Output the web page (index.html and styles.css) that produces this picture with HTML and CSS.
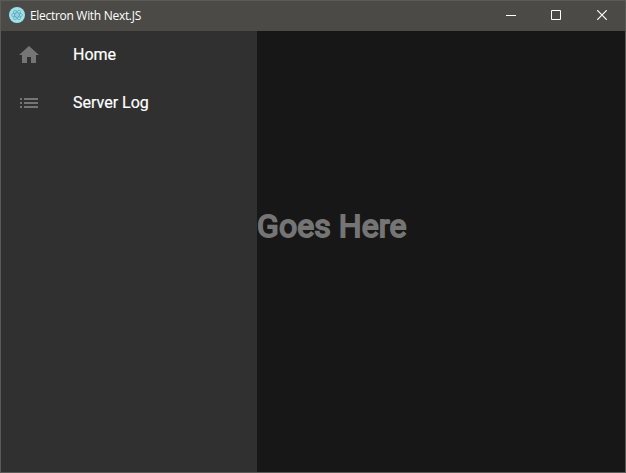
FILE: index.html
```html
<!DOCTYPE html>
<html lang="en">
<head>
<meta charset="utf-8">
<title>Electron With Next.JS</title>
<link rel="stylesheet" href="styles.css">
</head>
<body>
<div class="window">
  <header class="titlebar">
    <svg class="app-icon" width="16" height="16" viewBox="0 0 16 16">
      <circle cx="8" cy="8" r="8" fill="#9de3ee"/>
      <g fill="none" stroke="#47848f" stroke-width=".45">
        <ellipse cx="8" cy="8" rx="5.4" ry="2.1" transform="rotate(0 8 8)"/>
        <ellipse cx="8" cy="8" rx="5.4" ry="2.1" transform="rotate(60 8 8)"/>
        <ellipse cx="8" cy="8" rx="5.4" ry="2.1" transform="rotate(120 8 8)"/>
      </g>
      <circle cx="8" cy="8" r=".5" fill="#47848f"/>
    </svg>
    <span class="title">Electron With Next.JS</span>
    <nav class="controls">
      <span class="control"><svg width="10" height="10" viewBox="0 0 10 10"><path d="M0 5.5h10"/></svg></span>
      <span class="control"><svg width="10" height="10" viewBox="0 0 10 10"><path d="M.5.5h9v9h-9z"/></svg></span>
      <span class="control"><svg width="10" height="10" viewBox="0 0 10 10"><path d="M.2.2l9.6 9.6M9.8.2L.2 9.8" stroke-width="1.2"/></svg></span>
    </nav>
  </header>
  <div class="content">
    <aside class="drawer">
      <a class="item">
        <svg class="icon" viewBox="0 0 24 24"><path d="M10 20v-6h4v6h5v-8h3L12 3 2 12h3v8z"/></svg>
        <span>Home</span>
      </a>
      <a class="item">
        <svg class="icon" viewBox="0 0 24 24"><path d="M3 13h2v-2H3v2zm0 4h2v-2H3v2zm0-8h2V7H3v2zm4 4h14v-2H7v2zm0 4h14v-2H7v2zM7 7v2h14V7H7z"/></svg>
        <span>Server Log</span>
      </a>
    </aside>
    <main class="page"><h1 class="heading">Goes Here</h1></main>
  </div>
</div>
</body>
</html>
```
FILE: styles.css
```css
* { box-sizing: border-box; }
body { margin: 0; background: #171717; font-family: Roboto, sans-serif; }
.window { height: 473px; display: flex; flex-direction: column; border: 1px solid #5a5a59; }
.titlebar { flex: 0 0 30px; display: flex; align-items: center; padding-left: 8px; background: #4b4a47; color: #fff; }
.app-icon { margin-top: -2px; }
.title { margin-left: 5px; font: 12px/16px "Open Sans", sans-serif; letter-spacing: -0.3px; white-space: nowrap; }
.controls { display: flex; margin-left: auto; }
.control { width: 46px; height: 30px; display: flex; align-items: center; justify-content: center; padding-bottom: 2px; }
.control:nth-child(2) { width: 44px; }
.control:nth-child(3) { width: 47px; }
.control svg { fill: none; stroke: #fff; stroke-width: 1; }
.content { flex: 1; display: flex; min-height: 0; }
.drawer { flex: 0 0 256px; background: #303030; }
.item { height: 48px; display: flex; align-items: center; padding: 0 16px; color: #fff; font-size: 16px; font-weight: 400; line-height: 24px; -webkit-text-stroke: 0.2px #fff; }
.icon { width: 24px; height: 24px; margin-right: 32px; fill: #757575; }
.page { flex: 1; background: #171717; padding-top: 176px; }
.heading { margin: 0; color: #757575; font-size: 32px; font-weight: 400; line-height: 38px; letter-spacing: 0.08px; white-space: nowrap; -webkit-text-stroke: 1.8px #757575; }
```
